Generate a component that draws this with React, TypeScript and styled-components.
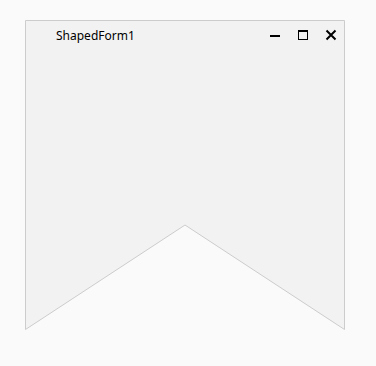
import React from "react";
import styled, { createGlobalStyle } from "styled-components";

const Global = createGlobalStyle`
  html, body { margin: 0; padding: 0; background: #fafafa; }
  body { font-family: "Segoe UI", "Noto Sans", "Open Sans", sans-serif; }
`;

const Page = styled.div`
  width: 376px;
  height: 366px;
  padding: 20px 0 0 25px;
  box-sizing: border-box;
`;

const Window = styled.div`
  position: relative;
  width: 320px;
  height: 310px;
`;

const Shape = styled.svg`
  position: absolute;
  inset: 0;
  width: 320px;
  height: 310px;
  display: block;
`;

const TitleBar = styled.div`
  position: relative;
  display: flex;
  align-items: center;
  height: 30px;
  padding: 0 0 0 31px;
`;

const Title = styled.span`
  flex: 1;
  font-family: "Noto Sans", "Open Sans", sans-serif;
  font-size: 12px;
  color: #000;
  line-height: 16px;
  margin-top: 1px;
`;

const Buttons = styled.div`
  display: flex;
  align-items: center;
  margin-right: 0;
`;

const Btn = styled.div`
  width: 28px;
  height: 30px;
  display: flex;
  align-items: center;
  justify-content: center;
`;

export default function App() {
  return (
    <>
      <Global />
      <Page>
        <Window>
          <Shape viewBox="0 0 320 310">
            <path
              d="M0.5 0.5 H319.5 V309.5 L160 205 L0.5 309.5 Z"
              fill="#f2f2f2"
              stroke="#cccccc"
              strokeWidth="1"
            />
          </Shape>
          <TitleBar>
            <Title>ShapedForm1</Title>
            <Buttons>
              <Btn>
                <svg width="12" height="12" viewBox="0 0 12 12">
                  <rect x="1" y="6" width="10" height="2" fill="#000" />
                </svg>
              </Btn>
              <Btn>
                <svg width="12" height="12" viewBox="0 0 12 12">
                  <rect x="1.5" y="1.5" width="9" height="9" fill="none" stroke="#000" strokeWidth="1" />
                  <rect x="1" y="1" width="10" height="2" fill="#000" />
                </svg>
              </Btn>
              <Btn>
                <svg width="12" height="12" viewBox="0 0 12 12">
                  <path d="M1.5 1.5 L10.5 10.5 M10.5 1.5 L1.5 10.5" stroke="#000" strokeWidth="2" />
                </svg>
              </Btn>
            </Buttons>
          </TitleBar>
        </Window>
      </Page>
    </>
  );
}
